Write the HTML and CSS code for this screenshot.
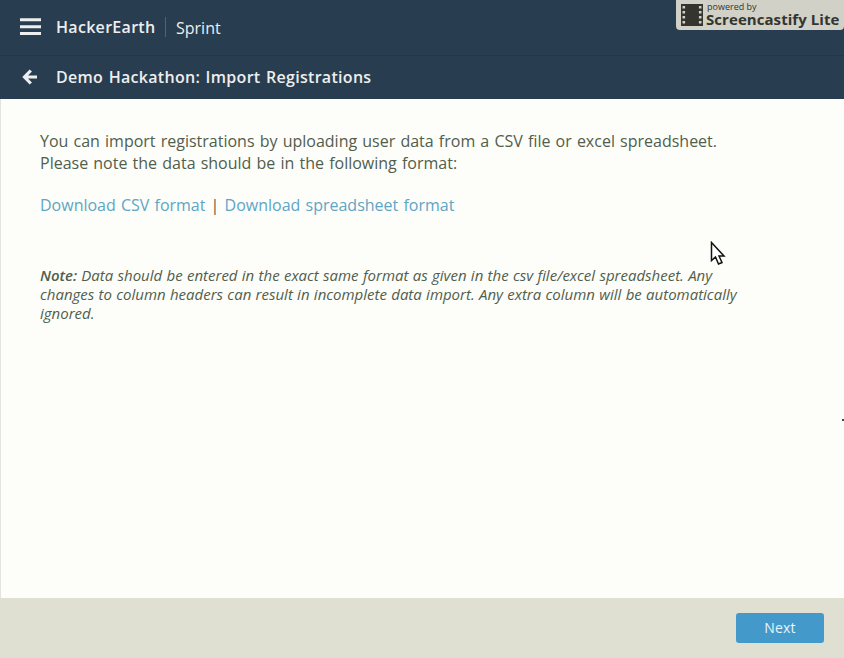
FILE: index.html
```html
<!DOCTYPE html>
<html lang="en">
<head>
<meta charset="utf-8">
<title>Import Registrations</title>
<link rel="stylesheet" href="styles.css">
</head>
<body>
<header class="header">
  <div class="topbar">
    <svg class="menu" viewBox="0 0 21 18" width="21" height="18"><path d="M0 1.8h21M0 8.7h21M0 15.6h21" stroke="#eee" stroke-width="3"/></svg>
    <span class="brand">HackerEarth</span>
    <span class="product">Sprint</span>
  </div>
  <div class="titlebar">
    <svg class="back" viewBox="0 0 16 16" width="16" height="16"><path d="M8.8 1.500 2.500 8l6.300 6.500M3 8h12" fill="none" stroke="#eee" stroke-width="3.200"/></svg>
    <h1 class="title">Demo Hackathon: Import Registrations</h1>
  </div>
</header>
<main class="content">
  <p class="intro">You can import registrations by uploading user data from a CSV file or excel spreadsheet.<br>Please note the data should be in the following format:</p>
  <p class="links"><a class="link">Download CSV format</a> | <a class="link">Download spreadsheet format</a></p>
  <p class="note"><strong class="note-label">Note:</strong> Data should be entered in the exact same format as given in the csv file/excel spreadsheet. Any<br>changes to column headers can result in incomplete data import. Any extra column will be automatically<br>ignored.</p>
</main>
<footer class="footer"><button class="next">Next</button></footer>
<aside class="watermark">
  <svg class="film" viewBox="0 0 22 22" width="22" height="22"><path fill="#34352f" d="M0 0h22v22H0z"/><path d="M2.800 2v19M19.200 2v19" stroke="#d0d0c8" stroke-width="2.600" stroke-dasharray="2.500 2.500"/></svg>
  <div class="watermark-text"><span class="powered">powered by</span><span class="caster">Screencastify Lite</span></div>
</aside>
<svg class="cursor" viewBox="0 0 16 25" width="16" height="25"><path d="M1.500 1.500v18l4-3.500 3 7 3.500-1.500-3-6.500h5z" fill="#fff" stroke="#111" stroke-width="1.500"/></svg>
<i class="speck"></i>
</body>
</html>
```
FILE: styles.css
```css
* { box-sizing: border-box; }
body {
  margin: 0;
  height: 658px;
  display: flex;
  flex-direction: column;
  position: relative;
  overflow: hidden;
  background: #fdfdf9;
  color: #515e4d;
  font-family: "Open Sans", sans-serif;
}
.header { height: 99px; background: #283e50; color: #eee; }
.topbar { height: 56px; display: flex; align-items: center; padding-left: 20px; border-bottom: 1px solid #233646; }
.menu { margin: -2px 15px 0 0; }
.brand { font-size: 16px; font-weight: 600; letter-spacing: 0.3px; width: 110px; border-right: 1px solid #53617a; line-height: 20px; margin-top: -2px; }
.product { font-size: 16px; padding-left: 10px; line-height: 20px; }
.titlebar { height: 42px; display: flex; align-items: center; padding-left: 22px; }
.back { margin-right: 18px; }
.title { margin: 0; font-size: 16px; font-weight: 600; letter-spacing: 0.3px; word-spacing: 1px; white-space: nowrap; }
.content { flex: 1; padding: 31px 40px 0 39px; border-left: 1px solid #e4e4dc; white-space: nowrap; }
.intro, .links { margin: 0 0 20px; font-size: 16px; line-height: 22px; word-spacing: 1px; }
.link { color: #5fa5c5; }
.note { margin: 50px 0 0; font-size: 15px; line-height: 19px; font-style: italic; word-spacing: 0.4px; }
.note-label { font-weight: 600; }
.footer { height: 60px; background: #dfdfd2; display: flex; justify-content: flex-end; padding: 15px 20px; }
.next { width: 88px; height: 30px; padding: 0 0 2px; border: 0; border-radius: 3px; background: #4499cb; color: #e6f5fa; font: 14px "Open Sans", sans-serif; letter-spacing: 0.2px; }
.watermark { position: absolute; left: 676px; top: 0; width: 168px; height: 30px; display: flex; padding: 4px 0 0 5px; border-radius: 0 0 4px 4px; background: #d1d1c8; color: #34352f; white-space: nowrap; }
.watermark-text { display: flex; flex-direction: column; margin: -3px 0 0 3px; }
.powered { font-size: 9px; line-height: 11px; padding-left: 1px; }
.caster { font-size: 15px; font-weight: 700; line-height: 14px; letter-spacing: 0.06px; }
.cursor { position: absolute; left: 710px; top: 241px; }
.speck { position: absolute; right: 0; top: 419px; width: 2px; height: 2px; background: #445; }
```
